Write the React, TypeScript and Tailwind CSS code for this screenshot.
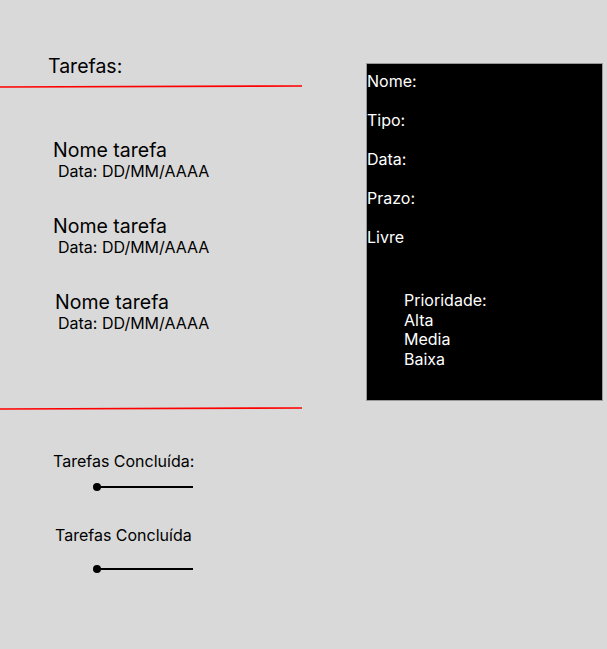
import React from 'react';

const tasks = [
  { name: 'Nome tarefa', date: 'Data: DD/MM/AAAA', nameOffset: 'pl-[53px]' },
  { name: 'Nome tarefa', date: 'Data: DD/MM/AAAA', nameOffset: 'pl-[53px]' },
  { name: 'Nome tarefa', date: 'Data: DD/MM/AAAA', nameOffset: 'pl-[55px]' },
];

function RedLine() {
  return (
    <svg width="302" height="3" viewBox="0 0 302 3" className="block">
      <line x1="0" y1="2" x2="302" y2="1" stroke="#ff0000" strokeWidth="1.6" />
    </svg>
  );
}

function Slider() {
  return (
    <div className="flex items-center pl-[93px]">
      <div className="w-[8px] h-[8px] rounded-full bg-black" />
      <div className="w-[93px] h-[2px] bg-black -ml-[1px]" />
    </div>
  );
}

export default function App() {
  return (
    <div
      className="w-[607px] h-[649px] bg-[#d9d9d9] flex text-black overflow-hidden"
      style={{ fontFamily: 'Inter, "Noto Sans", sans-serif' }}
    >
      {/* Left column */}
      <div className="w-[302px] flex flex-col">
        <div className="pl-[48px] mt-[55px] text-[19.5px] leading-[22px]">Tarefas:</div>
        <div className="mt-[8px]">
          <RedLine />
        </div>

        <div className="flex flex-col gap-[35px] mt-[51px]">
          {tasks.map((t, i) => (
            <div key={i} className="flex flex-col">
              <div className={`${t.nameOffset} text-[19.5px] leading-[22px]`}>{t.name}</div>
              <div className="pl-[58px] text-[16px] leading-[18px] mt-[1px]">{t.date}</div>
            </div>
          ))}
        </div>

        <div className="mt-[75px]">
          <RedLine />
        </div>

        <div className="pl-[53px] mt-[42px] text-[16px] leading-[18px]">Tarefas Concluída:</div>
        <div className="mt-[13px]">
          <Slider />
        </div>
        <div className="pl-[55px] mt-[35px] text-[16px] leading-[18px]">Tarefas Concluída</div>
        <div className="mt-[21px]">
          <Slider />
        </div>
      </div>

      {/* Detail panel */}
      <div className="pl-[64px] pt-[63px]">
        <div className="w-[237px] h-[338px] bg-black border border-[#9a9a9a] text-white text-[16px] leading-[18px] pt-[8px]">
          <div className="flex flex-col gap-[21px]">
            <div>Nome:</div>
            <div>Tipo:</div>
            <div>Data:</div>
            <div>Prazo:</div>
            <div>Livre</div>
          </div>
          <div className="pl-[37px] mt-[45px] flex flex-col leading-[19.5px]">
            <div>Prioridade:</div>
            <div>Alta</div>
            <div>Media</div>
            <div>Baixa</div>
          </div>
        </div>
      </div>
    </div>
  );
}
